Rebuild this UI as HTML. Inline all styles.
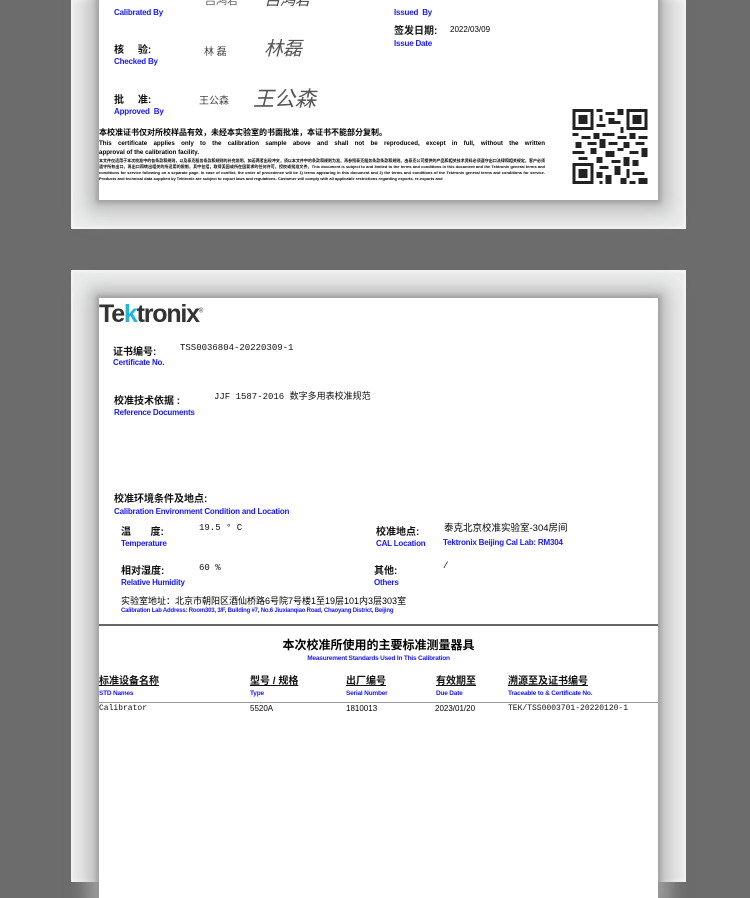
<!DOCTYPE html>
<html><head><meta charset="utf-8"><style>
*{margin:0;padding:0;box-sizing:border-box}
body{width:750px;height:882px;background:#6c6c6c;position:relative;overflow:hidden;font-family:"Liberation Sans","Noto Sans CJK SC",sans-serif}
.frame{position:absolute;left:71px;width:615px;background:#ebecec;box-shadow:inset 0 0 3px 2px #f6f6f6}
.paper{position:absolute;left:99px;width:559px;background:#fff;box-shadow:0 0 4px 3px rgba(150,150,150,.7),0 0 14px 10px rgba(170,170,170,.55),0 4px 20px 12px rgba(190,190,190,.4)}
.a{position:absolute;white-space:nowrap;line-height:1.1}
.cn{font-weight:bold;font-size:10px;color:#111;margin-top:3px}
.en{font-size:8px;color:#1a1aee;font-weight:bold;letter-spacing:-.2px;margin-top:2px}
.v{font-size:9px;color:#111;font-family:"Liberation Mono","Noto Sans CJK SC",monospace;margin-top:2px}
.t{margin-top:2px}
.sm{font-size:4px;line-height:6px;color:#000;font-weight:bold}
</style></head><body>
<div class="frame" style="top:0;height:229px"></div>
<div class="paper" style="top:-10px;height:210px"></div>
<div class="frame" style="top:270px;height:612px"></div>
<div class="paper" style="top:298px;height:600px"></div>

<!-- top paper -->
<div class="a en" style="left:114px;top:7px">Calibrated By</div>
<div class="a" style="left:205px;top:-5px;color:#666;font-size:11px">吕鸿君</div>
<div class="a" style="left:265px;top:-7px;font-size:15px;color:#444;font-style:italic">吕鸿君</div>
<div class="a en" style="left:394px;top:7px">Issued&nbsp; By</div>
<div class="a cn" style="left:394px;top:23px">签发日期:</div>
<div class="a t" style="left:450px;top:24px;font-size:8px">2022/03/09</div>
<div class="a en" style="left:394px;top:38px">Issue Date</div>
<div class="a cn" style="left:114px;top:42px">核&nbsp;&nbsp;&nbsp;&nbsp; 验:</div>
<div class="a en" style="left:114px;top:56px">Checked By</div>
<div class="a t" style="left:204px;top:45px;font-size:10px;color:#444">林 磊</div>
<div class="a t" style="left:264px;top:38px;font-size:19px;color:#555;font-style:italic">林磊</div>
<div class="a cn" style="left:114px;top:92px">批&nbsp;&nbsp;&nbsp;&nbsp; 准:</div>
<div class="a en" style="left:114px;top:106px">Approved&nbsp; By</div>
<div class="a t" style="left:199px;top:94px;font-size:10px;color:#444">王公森</div>
<div class="a t" style="left:253px;top:86px;font-size:21px;color:#555;font-style:italic">王公森</div>
<div class="a t" style="left:99px;top:127px;font-size:8px;font-weight:bold">本校准证书仅对所校样品有效，未经本实验室的书面批准，本证书不能部分复制。</div>
<div class="a" style="left:99px;top:139px;width:446px;white-space:normal;font-size:6.2px;font-weight:bold;line-height:10px;text-align:justify;text-align-last:justify">This certificate applies only to the calibration sample above and shall not be reproduced, except in full, without the written</div>
<div class="a" style="left:99px;top:150px;font-size:6.2px;font-weight:bold">approval of the calibration facility.</div>
<div class="a sm" style="left:99px;top:158px;width:446px;white-space:normal;text-align:justify;line-height:6px">本文件仅适用于本次校准中的各条款和规则，以及泰克服务条款和规则的补充说明。如若两者出现冲突，须以本文件中的条款和规则为准。再参照泰克服务条款条款和规则。由泰克公司提供的产品和相关技术资料必须遵守出口法律和相关规定。客户必须遵守所有出口，再出口和转出相关的所适用的限制。其中包括，取得美国或所在国要求的任何许可。授权或批准文件。This document is subject to and limited to the terms and conditions in this document and the Tektronix general terms and conditions for service following on a separate page. In case of conflict, the order of precedence will be 1) terms appearing in this document and 2) the terms and conditions of the Tektronix general terms and conditions for service. Products and technical data supplied by Tektronix are subject to export laws and regulations. Customer will comply with all applicable restrictions regarding exports, re-exports and</div>
<svg class="a" style="left:572px;top:109px" width="76" height="75" viewBox="0 0 25 25" shape-rendering="crispEdges">
<rect width="25" height="25" fill="#fff"/>
<g fill="#222"><path d="M0 0h7v7H0zM18 0h7v7h-7zM0 18h7v7H0z"/></g>
<g fill="#fff"><path d="M1 1h5v5H1zM19 1h5v5h-5zM1 19h5v5H1z"/></g>
<g fill="#222"><path d="M2 2h3v3H2zM20 2h3v3h-3zM2 20h3v3H2z"/>
<path d="M8 0h2v1H8zM11 1h3v1h-3zM9 2h1v2H9zM12 3h2v2h-2zM15 0h2v2h-2zM14 4h2v1h-2zM8 5h3v1H8zM16 6h1v2h-1zM0 8h2v1H0zM3 9h3v1H3zM7 8h2v2H7zM10 8h4v1h-4zM15 9h3v1h-3zM19 8h2v2h-2zM22 9h3v1h-3zM1 11h2v2H1zM5 11h3v1H5zM9 10h2v3H9zM12 11h3v1h-3zM17 11h2v2h-2zM21 11h3v1h-3zM0 14h4v1H0zM6 13h2v2H6zM11 14h3v2h-3zM15 13h2v1h-2zM19 14h3v1h-3zM23 13h2v3h-2zM2 16h3v1H2zM8 16h2v2H8zM13 17h3v1h-3zM17 16h2v3h-2zM20 17h2v2h-2zM9 19h3v1H9zM14 19h2v3h-2zM8 21h2v2H8zM11 22h2v3h-2zM18 20h1v3h-1zM20 21h4v1h-4zM22 23h3v2h-3zM16 23h2v2h-2zM19 24h2v1h-2zM9 24h1v1H9z"/></g>
</svg>

<!-- second paper -->
<div class="a" style="left:99px;top:302px;font-size:25px;font-weight:bold;color:#333;letter-spacing:-1.2px;line-height:1">Te<span style="color:#22b6d8">k</span>tronix<sup style="font-size:6px;font-weight:normal">®</sup></div>
<div class="a cn" style="left:113px;top:344px">证书编号:</div>
<div class="a v" style="left:180px;top:342px">TSS0036804-20220309-1</div>
<div class="a en" style="left:113px;top:357px">Certificate No.</div>
<div class="a cn" style="left:114px;top:393px">校准技术依据 :</div>
<div class="a v" style="left:214px;top:391px">JJF 1587-2016 数字多用表校准规范</div>
<div class="a en" style="left:114px;top:407px">Reference Documents</div>
<div class="a cn" style="left:114px;top:491px">校准环境条件及地点:</div>
<div class="a en" style="left:114px;top:506px">Calibration Environment Condition and Location</div>
<div class="a cn" style="left:121px;top:524px">温&nbsp;&nbsp;&nbsp;&nbsp;&nbsp;&nbsp; 度:</div>
<div class="a v" style="left:199px;top:522px">19.5 ° C</div>
<div class="a en" style="left:121px;top:538px">Temperature</div>
<div class="a cn" style="left:376px;top:524px">校准地点:</div>
<div class="a t" style="left:444px;top:522px;font-size:9.5px">泰克北京校准实验室-304房间</div>
<div class="a en" style="left:376px;top:538px">CAL Location</div>
<div class="a en" style="left:443px;top:537px">Tektronix Beijing Cal Lab: RM304</div>
<div class="a cn" style="left:121px;top:563px">相对湿度:</div>
<div class="a v" style="left:199px;top:562px">60 %</div>
<div class="a en" style="left:121px;top:577px">Relative Humidity</div>
<div class="a cn" style="left:374px;top:563px">其他:</div>
<div class="a v" style="left:443px;top:560px">/</div>
<div class="a en" style="left:374px;top:577px">Others</div>
<div class="a t" style="left:121px;top:595px;font-size:9px">实验室地址：北京市朝阳区酒仙桥路6号院7号楼1至19层101内3层303室</div>
<div class="a en" style="left:121px;top:606px;font-size:6px">Calibration Lab Address: Room303, 3/F, Building #7, No.6 Jiuxianqiao Road, Chaoyang District, Beijing</div>
<div class="a" style="left:99px;top:624px;width:559px;height:2px;background:#666"></div>
<div class="a t" style="left:99px;top:637px;width:559px;text-align:center;font-size:12px;font-weight:bold">本次校准所使用的主要标准测量器具</div>
<div class="a en" style="left:99px;top:653px;width:559px;text-align:center;font-size:6.5px">Measurement Standards Used In This Calibration</div>
<div class="a cn" style="left:99px;top:673px;text-decoration:underline">标准设备名称</div>
<div class="a cn" style="left:250px;top:673px;text-decoration:underline">型号 / 规格</div>
<div class="a cn" style="left:346px;top:673px;text-decoration:underline">出厂编号</div>
<div class="a cn" style="left:436px;top:673px;text-decoration:underline">有效期至</div>
<div class="a cn" style="left:508px;top:673px;text-decoration:underline">溯源至及证书编号</div>
<div class="a en" style="left:99px;top:688px;font-size:6.5px">STD Names</div>
<div class="a en" style="left:250px;top:688px;font-size:6.5px">Type</div>
<div class="a en" style="left:346px;top:688px;font-size:6.5px">Serial Number</div>
<div class="a en" style="left:436px;top:688px;font-size:6.5px">Due Date</div>
<div class="a en" style="left:508px;top:688px;font-size:6.5px">Traceable to &amp; Certificate No.</div>
<div class="a" style="left:99px;top:702px;width:559px;height:1px;background:#999"></div>
<div class="a v" style="left:99px;top:703px;font-size:8px">Calibrator</div>
<div class="a t" style="left:250px;top:703px;font-size:8px">5520A</div>
<div class="a t" style="left:346px;top:703px;font-size:8px">1810013</div>
<div class="a t" style="left:435px;top:703px;font-size:8px">2023/01/20</div>
<div class="a v" style="left:508px;top:703px;font-size:8px">TEK/TSS0003701-20220120-1</div>
</body></html>
